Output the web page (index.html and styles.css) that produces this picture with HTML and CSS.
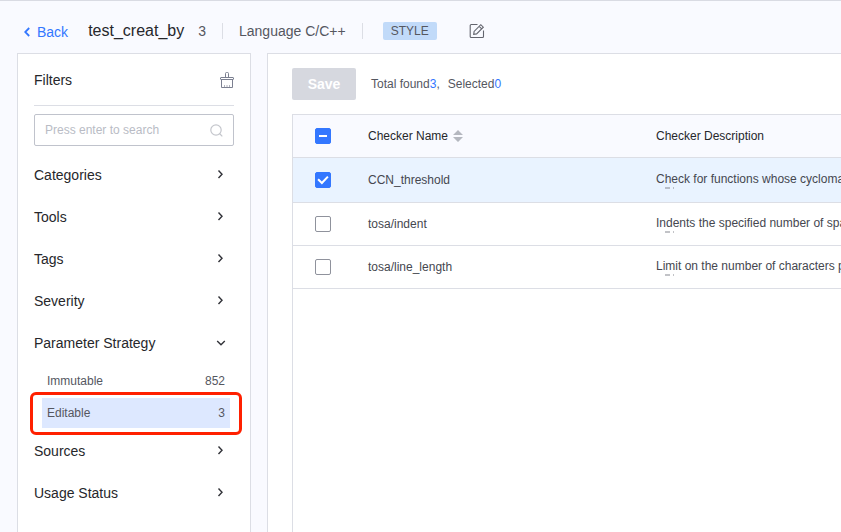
FILE: index.html
```
<!DOCTYPE html>
<html lang="en">
<head>
<meta charset="utf-8">
<title>test_creat_by</title>
<link rel="stylesheet" href="styles.css">
</head>
<body>
<header class="topbar">
  <a class="back" href="#"><svg width="6" height="10" viewBox="0 0 6 10"><path d="M5.200 1 1.200 5l4 4" fill="none" stroke="currentColor" stroke-width="1.800"/></svg>Back</a>
  <h1 class="title">test_creat_by</h1>
  <span class="count">3</span>
  <span class="language">Language C/C++</span>
  <span class="tag">STYLE</span>
  <button class="icon-button edit" aria-label="Edit"><svg width="16" height="16" viewBox="0 0 16 16" fill="none" stroke="#63656e" stroke-width="1.100"><path d="M8.500 1.500H2.200A1 1 0 0 0 1.200 2.500v11a1 1 0 0 0 1 1h11.300a1 1 0 0 0 1-1V7.500"/><path d="M4.700 11.300l.4-2.900 6.700-6.700 2.500 2.500-6.700 6.700z M10.200 3.300l2.500 2.500"/></svg></button>
</header>
<div class="layout">
  <aside class="filters">
    <div class="filters-head">
      <h2 class="filters-title">Filters</h2>
      <button class="icon-button" aria-label="Clear filters"><svg width="14" height="16" viewBox="0 0 14 16" fill="none" stroke="#7c8091"><path d="M5.500 5.500V1.500a1 1 0 0 1 1-1h1a1 1 0 0 1 1 1v4M1 5.500h12a.5 .5 0 0 1 .5 .5v1a.5 .5 0 0 1-.5 .5H1a.5 .5 0 0 1-.5-.5V6a.5 .5 0 0 1 .5-.5zM1.500 7.500v8h11v-8"/><path d="M4.500 15v-2M7 15v-2M9.500 15v-2" stroke-opacity=".6"/></svg></button>
    </div>
    <div class="search">
      <input class="search-input" type="search" placeholder="Press enter to search" aria-label="Search checkers">
      <svg class="search-icon" width="13" height="13" viewBox="0 0 13 13" fill="none" stroke="#c4c6cc" stroke-width="1.200"><circle cx="6" cy="6" r="5.200"/><path d="M9.500 9.500l2.800 2.800"/></svg>
    </div>
    <button class="group">Categories<svg class="arrow" viewBox="0 0 10 10"><path d="M2.500 .5l3.500 3.700-3.500 3.700"/></svg></button>
    <button class="group">Tools<svg class="arrow" viewBox="0 0 10 10"><path d="M2.500 .5l3.500 3.700-3.500 3.700"/></svg></button>
    <button class="group">Tags<svg class="arrow" viewBox="0 0 10 10"><path d="M2.500 .5l3.500 3.700-3.500 3.700"/></svg></button>
    <button class="group">Severity<svg class="arrow" viewBox="0 0 10 10"><path d="M2.500 .5l3.500 3.700-3.500 3.700"/></svg></button>
    <button class="group" aria-expanded="true">Parameter Strategy<svg class="arrow" viewBox="0 0 10 10"><path d="M1.200 3l3.800 3.700 3.800-3.700"/></svg></button>
    <div class="options">
      <button class="option"><span>Immutable</span><span>852</span></button>
      <button class="option selected"><span>Editable</span><span>3</span></button>
    </div>
    <button class="group">Sources<svg class="arrow" viewBox="0 0 10 10"><path d="M2.500 .5l3.500 3.700-3.500 3.700"/></svg></button>
    <button class="group">Usage Status<svg class="arrow" viewBox="0 0 10 10"><path d="M2.500 .5l3.500 3.700-3.500 3.700"/></svg></button>
  </aside>
  <main class="content">
    <div class="actions">
      <button class="save" disabled>Save</button>
      <p class="summary"><span>Total found<b>3</b>,</span><span>Selected<b>0</b></span></p>
    </div>
    <div class="table-wrap">
      <table class="checkers">
        <thead>
          <tr>
            <th class="col-check"><input class="check partial" type="checkbox" aria-label="Select all"></th>
            <th class="col-name"><span class="sortable">Checker Name<svg width="10" height="12" viewBox="0 0 10 12" fill="#b4b7bf"><path d="M5 0l5 5H0zM0 7h10l-5 5z"/></svg></span></th>
            <th class="col-desc">Checker Description</th>
          </tr>
        </thead>
        <tbody>
          <tr class="active">
            <td><input class="check" type="checkbox" checked aria-label="CCN_threshold"></td>
            <td>CCN_threshold</td>
            <td><div class="desc">Check for functions whose cyclomatic<svg class="more" width="20" height="2"><path d="M9 1h5M17 1h1"/></svg></div></td>
          </tr>
          <tr>
            <td><input class="check" type="checkbox" aria-label="tosa/indent"></td>
            <td>tosa/indent</td>
            <td><div class="desc">Indents the specified number of spaces<svg class="more" width="20" height="2"><path d="M9 1h5M17 1h1"/></svg></div></td>
          </tr>
          <tr>
            <td><input class="check" type="checkbox" aria-label="tosa/line_length"></td>
            <td>tosa/line_length</td>
            <td><div class="desc">Limit on the number of characters per line<svg class="more" width="20" height="2"><path d="M9 1h5M17 1h1"/></svg></div></td>
          </tr>
        </tbody>
      </table>
    </div>
  </main>
</div>
</body>
</html>
```
FILE: styles.css
```
* { box-sizing: border-box; }

body {
  margin: 0;
  min-height: 100vh;
  display: flex;
  flex-direction: column;
  overflow: hidden;
  background: #f9faff;
  border-top: 1px solid #d9dbe3;
  color: #55575f;
  font: 12px/16px "Liberation Sans", Arial, sans-serif;
}

button {
  font: inherit;
  color: inherit;
  border: 0;
  padding: 0;
  background: none;
  text-align: left;
}

svg { display: block; }

.topbar {
  display: flex;
  align-items: center;
  height: 52px;
  padding: 8px 24px 0;
  font-size: 14px;
  white-space: nowrap;
}

.back {
  display: flex;
  align-items: center;
  gap: 7px;
  margin-right: 20px;
  padding-top: 2px;
  color: #3377ff;
  text-decoration: none;
}

.title {
  margin: 0 14px 0 0;
  font-size: 16px;
  font-weight: 400;
  color: #26272b;
}

.count,
.language {
  padding-right: 16px;
  border-right: 1px solid #dcdee5;
}

.language { padding-left: 16px; }

.tag {
  margin: 0 32px 0 20px;
  padding: 0 8px;
  border-radius: 2px;
  background: #c1daf9;
  font-size: 12px;
  line-height: 18px;
}

.layout {
  flex: 1;
  display: flex;
  gap: 16px;
  padding-left: 17px;
}

.filters {
  flex: 0 0 234px;
  padding: 0 16px;
  background: #fff;
  border: 1px solid #dcdee5;
  border-bottom: 0;
}

.filters-head {
  display: flex;
  align-items: center;
  justify-content: space-between;
  height: 52px;
  border-bottom: 1px solid #dcdee5;
}

.filters-title {
  margin: 0;
  font-size: 14px;
  font-weight: 400;
  color: #26272b;
}

.search {
  display: flex;
  align-items: center;
  height: 32px;
  margin: 8px 0;
  padding: 0 10px;
  border: 1px solid #c0c3cc;
  border-radius: 2px;
}

.search-input {
  flex: 1;
  min-width: 0;
  padding: 0;
  border: 0;
  outline: 0;
  background: none;
  font: inherit;
}

.search-input::placeholder { color: #b9bcc5; }

.group {
  display: flex;
  align-items: center;
  justify-content: space-between;
  width: 100%;
  height: 42px;
  padding-right: 8px;
  font-size: 14px;
  color: #26272b;
}

.arrow {
  width: 10px;
  height: 10px;
  fill: none;
  stroke: #313238;
  stroke-width: 1.4;
}

.options {
  display: grid;
  gap: 2px;
  padding: 2px 4px 2px 8px;
}

.option {
  display: flex;
  align-items: center;
  justify-content: space-between;
  height: 30px;
  padding: 0 5px;
}

.selected {
  position: relative;
  background: #dde8ff;
}

.selected::after {
  content: "";
  position: absolute;
  inset: -6px -12px -7px;
  border: 3px solid #ff2000;
  border-radius: 6px;
}

.content {
  flex: 1;
  min-width: 0;
  display: flex;
  flex-direction: column;
  padding: 14px 0 0 24px;
  background: #fff;
  border: 1px solid #dcdee5;
  border-width: 1px 0 0 1px;
}

.actions {
  display: flex;
  align-items: center;
  gap: 15px;
  margin-bottom: 14px;
}

.save {
  width: 64px;
  height: 32px;
  border-radius: 2px;
  background: #d6d8df;
  color: #fff;
  font-size: 14px;
  font-weight: 700;
  text-align: center;
}

.summary {
  display: flex;
  gap: 8px;
  margin: 0;
}

.summary b {
  font-weight: 400;
  color: #3377ff;
}

.table-wrap {
  flex: 1;
  overflow: hidden;
  border: 1px solid #dcdee5;
  border-width: 1px 0 0 1px;
}

.checkers {
  width: 100%;
  table-layout: fixed;
  border-collapse: separate;
  border-spacing: 0;
  color: #45474f;
  white-space: nowrap;
}

.checkers th,
.checkers td {
  height: 43px;
  padding: 0;
  border-bottom: 1px solid #dcdee5;
  text-align: left;
  font-weight: 400;
}

.checkers th {
  background: #f9faff;
  color: #26272b;
}

.checkers .active td {
  height: 45px;
  background: #e9f3ff;
}

.col-check { width: 75px; }
.col-name { width: 288px; }

.sortable {
  display: flex;
  align-items: center;
  gap: 5px;
}

.check {
  appearance: none;
  display: block;
  width: 16px;
  height: 16px;
  margin: 0 0 0 22px;
  border: 1px solid #8f929c;
  border-radius: 2px;
  background: #fff;
}

.check:checked,
.check.partial {
  display: grid;
  place-items: center;
  border-color: #3377ff;
  background: #3377ff;
}

.check:checked::before {
  content: "";
  width: 12px;
  height: 10px;
  background: #fff;
  clip-path: polygon(3% 50%, 15% 36%, 40% 64%, 85% 10%, 97% 23%, 41% 94%);
}

.check.partial::before {
  content: "";
  width: 8px;
  height: 2px;
  background: #fff;
}

.desc {
  height: 18px;
  overflow: hidden;
}

.more {
  stroke: #85878f;
  stroke-width: 1;
}
```
